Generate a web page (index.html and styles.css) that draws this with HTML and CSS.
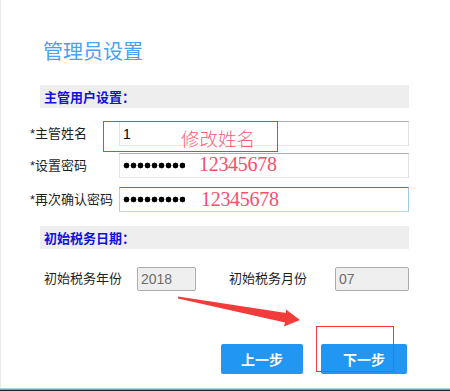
FILE: index.html
```html
<!DOCTYPE html>
<html lang="zh-CN">

<head>
  <meta charset="UTF-8">
  <meta name="viewport" content="width=device-width, initial-scale=1.0">
  <title>管理员设置</title>
  <link rel="stylesheet" href="styles.css">
</head>

<body>
  <div class="page">
    <h1 class="page-title">管理员设置</h1>

    <div class="section-bar">主管用户设置<span class="colon">：</span></div>

    <div class="form-row">
      <label class="form-label">*主管姓名</label>
      <div class="field">1</div>
    </div>
    <div class="form-row row-password">
      <label class="form-label">*设置密码</label>
      <div class="field"><span class="dots"></span></div>
    </div>
    <div class="form-row row-confirm">
      <label class="form-label">*再次确认密码</label>
      <div class="field focus"><span class="dots"></span></div>
    </div>

    <div class="section-bar bar-date">初始税务日期<span class="colon">：</span></div>

    <div class="date-row">
      <label class="date-label">初始税务年份</label>
      <div class="field readonly year">2018</div>
      <label class="date-label month-label">初始税务月份</label>
      <div class="field readonly month">07</div>
    </div>

    <div class="actions">
      <button class="btn">上一步</button>
      <button class="btn btn-next">下一步</button>
    </div>

    <!-- annotations drawn over the form -->
    <div class="mark-box box-name"></div>
    <div class="mark-box box-next"></div>
    <span class="note note-name">修改姓名</span>
    <span class="note-num num-1">12345678</span>
    <span class="note-num num-2">12345678</span>
    <svg class="arrow" width="450" height="391" viewBox="0 0 450 391">
      <polygon points="178,296.5 286,313 286,309.5 300,320 284,326.5 285,322.5 178,298.5" fill="#f23b3b" />
    </svg>
  </div>
  <div class="footer-line"></div>
</body>

</html>
```

FILE: styles.css
```css
html,
body {
  margin: 0;
  height: 391px;
  overflow: hidden;
  background: #fff;
}

body {
  font-family: "Liberation Sans", "Noto Sans CJK SC", sans-serif;
  color: #1e1e1e;
}

.page {
  position: relative;
  height: 388px;
  box-sizing: border-box;
  padding: 38px 41px 0 40px;
  box-shadow: inset 1px 0 #ebebeb;
}

.page-title {
  margin: 0 0 19px;
  padding-left: 3px;
  font-size: 20px;
  line-height: 28px;
  font-weight: normal;
  color: #47a2f6;
}

.section-bar {
  height: 23px;
  line-height: 23px;
  padding-left: 4px;
  background: #eeeeee;
  color: #1111e0;
  font-size: 13px;
  font-weight: bold;
}

.section-bar .colon {
  font-family: "Noto Sans CJK TC", sans-serif;
}

.bar-date {
  margin-top: 14px;
}

.form-row {
  display: flex;
  align-items: center;
  margin: 13px 0 0 -10px;
}

.row-password {
  margin-top: 7px;
}

.row-confirm {
  margin-top: 9px;
}

.form-label {
  width: 89px;
  font-size: 13px;
  line-height: 18px;
  white-space: nowrap;
}

.field {
  flex: 1;
  height: 25px;
  box-sizing: border-box;
  display: flex;
  align-items: center;
  padding-left: 3px;
  border: 1px solid;
  border-color: #abadb3 #dfe2e8 #e3e9ef #e2e3ea;
  background: #fff;
  font-size: 14px;
  color: #000;
}

.field.focus {
  border-color: #3d7bad #a4c9e3 #b7d9ed #b5cfe7;
}

.dots {
  width: 62px;
  height: 7px;
  background: radial-gradient(circle, #000 2.6px, transparent 3.2px) 0 0 / 7px 7px;
}

.date-row {
  display: flex;
  align-items: center;
  margin-top: 18px;
  padding-left: 4px;
}

.date-label {
  width: 93px;
  font-size: 13px;
  line-height: 18px;
  white-space: nowrap;
}

.month-label {
  width: 106px;
  margin-left: 33px;
}

.field.readonly {
  height: 24px;
  background: #efefef;
  border-color: #adadad;
  border-radius: 2px;
  color: #6d6d6d;
}

.field.year {
  flex: none;
  width: 59px;
}

.actions {
  display: flex;
  justify-content: flex-end;
  gap: 18px;
  margin: 53px 2px 0 0;
}

.btn {
  width: 82px;
  height: 30px;
  padding: 0;
  border: none;
  border-radius: 2px;
  background-color: #2196f3;
  color: #fff;
  font-family: inherit;
  font-size: 14px;
  font-weight: bold;
  cursor: pointer;
}

.btn-next {
  width: 86px;
}

.mark-box {
  position: absolute;
  border: 1px solid #ee3b3b;
}

.box-name {
  left: 103px;
  top: 121px;
  width: 173px;
  height: 29px;
}

.box-next {
  left: 316px;
  top: 326px;
  width: 76px;
  height: 44px;
}

.note {
  position: absolute;
  left: 181px;
  top: 129px;
  font-family: "Noto Sans CJK SC", sans-serif;
  font-size: 18.5px;
  line-height: 19px;
  font-weight: 300;
  color: #f2607c;
}

.note-num {
  position: absolute;
  font-family: "Liberation Serif", serif;
  font-size: 20px;
  line-height: 20px;
  letter-spacing: -0.3px;
  color: #f5506c;
}

.num-1 {
  left: 199px;
  top: 154px;
}

.num-2 {
  left: 201px;
  top: 189px;
}

.arrow {
  position: absolute;
  left: 0;
  top: 0;
  pointer-events: none;
}

.footer-line {
  height: 3px;
  background: linear-gradient(#a8d8f0 0 1px, #37b4e8 1px 2px, #1b2836 2px);
}
```
